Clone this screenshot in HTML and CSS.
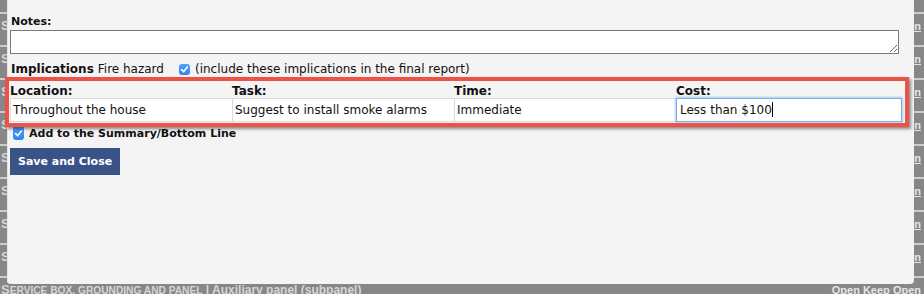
FILE: index.html
```html
<!DOCTYPE html>
<html lang="en">
<head>
    <meta charset="UTF-8">
    <title>Inspection items</title>
    <link rel="stylesheet" href="styles.css">
</head>
<body>
    <div class="screen">
        <ul class="rows">
            <li class="row"><span class="row-title"><span class="row-cat">Service box, grounding and panel</span> | Auxiliary panel (subpanel)</span><span class="row-links"><a href="#">Open</a> <a href="#">Keep Open</a></span></li>
            <li class="row"><span class="row-title"><span class="row-cat">Service box, grounding and panel</span> | Auxiliary panel (subpanel)</span><span class="row-links"><a href="#">Open</a> <a href="#">Keep Open</a></span></li>
            <li class="row"><span class="row-title"><span class="row-cat">Service box, grounding and panel</span> | Auxiliary panel (subpanel)</span><span class="row-links"><a href="#">Open</a> <a href="#">Keep Open</a></span></li>
            <li class="row"><span class="row-title"><span class="row-cat">Service box, grounding and panel</span> | Auxiliary panel (subpanel)</span><span class="row-links"><a href="#">Open</a> <a href="#">Keep Open</a></span></li>
            <li class="row"><span class="row-title"><span class="row-cat">Service box, grounding and panel</span> | Auxiliary panel (subpanel)</span><span class="row-links"><a href="#">Open</a> <a href="#">Keep Open</a></span></li>
            <li class="row"><span class="row-title"><span class="row-cat">Service box, grounding and panel</span> | Auxiliary panel (subpanel)</span><span class="row-links"><a href="#">Open</a> <a href="#">Keep Open</a></span></li>
            <li class="row"><span class="row-title"><span class="row-cat">Service box, grounding and panel</span> | Auxiliary panel (subpanel)</span><span class="row-links"><a href="#">Open</a> <a href="#">Keep Open</a></span></li>
            <li class="row"><span class="row-title"><span class="row-cat">Service box, grounding and panel</span> | Auxiliary panel (subpanel)</span><span class="row-links"><a href="#">Open</a> <a href="#">Keep Open</a></span></li>
            <li class="row"><span class="row-title"><span class="row-cat">Service box, grounding and panel</span> | Auxiliary panel (subpanel)</span><span class="row-links"><a href="#">Open</a> <a href="#">Keep Open</a></span></li>
        </ul>

        <div class="dialog">
            <div class="field-label">Notes:</div>
            <textarea class="notes"></textarea>

            <div class="implications">
                <b>Implications</b> <span class="impl-text">Fire hazard</span>
                <span class="chk"><svg viewBox="0 0 11 11" width="11" height="11"><path d="M2.6 5.6 L4.6 7.8 L8.4 3" fill="none" stroke="#fff" stroke-width="1.6" stroke-linecap="round" stroke-linejoin="round"/></svg></span>
                <span>(include these implications in the final report)</span>
            </div>

            <div class="rec-table">
                <div class="rec-head">Location:</div>
                <div class="rec-head">Task:</div>
                <div class="rec-head">Time:</div>
                <div class="rec-head">Cost:</div>
                <div class="rec-cell">Throughout the house</div>
                <div class="rec-cell">Suggest to install smoke alarms</div>
                <div class="rec-cell">Immediate</div>
                <div class="rec-cell focused">Less than $100<span class="caret"></span></div>
            </div>

            <div class="summary">
                <span class="chk"><svg viewBox="0 0 11 14" width="11" height="14"><path d="M2.6 7.6 L4.6 9.8 L8.4 5" fill="none" stroke="#fff" stroke-width="1.6" stroke-linecap="round" stroke-linejoin="round"/></svg></span>
                <b>Add to the Summary/Bottom Line</b>
            </div>

            <button class="save-btn">Save and Close</button>

            <!-- red highlight drawn over the recommendation row -->
            <div class="highlight"></div>
        </div>
    </div>
</body>
</html>
```

FILE: styles.css
```css
/* page */
body {
    margin: 0;
    background: #878787;
    font-family: 'DejaVu Sans', Verdana, sans-serif;
    overflow: hidden;
}
.screen {
    position: relative;
    width: 924px;
    height: 294px;
    overflow: hidden;
}

/* list behind the dialog */
.rows {
    list-style: none;
    margin: 0;
    padding: 0;
}
.rows::before {
    content: '';
    display: block;
    height: 12px;
    border-bottom: 2px solid #cdcdcd;
}
.row {
    display: flex;
    justify-content: space-between;
    align-items: baseline;
    height: 33px;
    padding: 4px 3px 0 1px;
    box-sizing: border-box;
    border-bottom: 2px solid #cdcdcd;
    background: #878787;
    font-family: 'Liberation Sans', Arial, sans-serif;
    font-weight: bold;
    font-size: 12px;
    line-height: 16px;
    color: #d6d6d6;
}
.row-cat {
    display: inline-block;
    text-transform: uppercase;
    font-size: 10.2px;
}
.row-cat::first-letter {
    font-size: 13px;
}
.row-links {
    font-size: 11px;
}
.row-links a {
    color: #e6e6e6;
    text-decoration: underline;
}
.row:last-child .row-links a {
    text-decoration: none;
}

/* dialog */
.dialog {
    position: absolute;
    left: 7px;
    top: 0;
    width: 907px;
    height: 284px;
    box-sizing: border-box;
    padding: 15px 3px 0;
    background: #f4f4f4;
    box-shadow: inset 1px 0 0 #e4e4e4;
    border-radius: 0 0 4px 4px;
    font-size: 12px;
    line-height: 14px;
    color: #111;
}
.field-label {
    font-weight: bold;
    font-size: 11px;
    padding-left: 1px;
}
.notes {
    display: block;
    width: 889px;
    height: 24px;
    margin: 1px 0 0;
    box-sizing: border-box;
    border: 1px solid #7a7a7a;
    background: #fff;
    resize: vertical;
}
.implications {
    display: flex;
    align-items: center;
    margin-top: 8px;
    padding-left: 1px;
}
.implications b {
    margin-right: 4px;
}
.impl-text {
    margin-right: 15px;
}
.chk {
    display: inline-flex;
    width: 11px;
    height: 11px;
    border-radius: 3px;
    background: linear-gradient(#4da0fb, #2f86f4);
    margin-right: 5px;
}

/* location / task / time / cost */
.rec-table {
    display: grid;
    grid-template-columns: 222px 222px 222px 226px;
    margin-top: 8px;
}
.rec-head {
    font-weight: bold;
    line-height: 14px;
}
.rec-cell {
    height: 24px;
    box-sizing: border-box;
    padding: 0 2px;
    line-height: 22px;
    background: #fff;
    border: 1px solid #dadada;
    border-right: none;
}
.rec-cell.focused {
    border: 1px solid #78aee6;
    box-shadow: 0 0 2px 1px #a9cdf3;
    padding: 0 3px;
}
.caret {
    display: inline-block;
    width: 1px;
    height: 15px;
    background: #000;
    vertical-align: -3px;
}

.summary {
    display: flex;
    align-items: center;
    margin-top: 3px;
    padding-left: 3px;
}
.summary .chk {
    width: 11px;
    height: 14px;
}
.summary b {
    font-size: 11px;
    padding-top: 2px;
}

.save-btn {
    display: block;
    margin-top: 7px;
    height: 27px;
    padding: 0 8px;
    border: none;
    background: #3a5387;
    color: #fff;
    font-family: 'DejaVu Sans', Verdana, sans-serif;
    font-weight: bold;
    font-size: 11px;
}

.highlight {
    position: absolute;
    left: -2px;
    top: 77px;
    width: 904px;
    height: 50px;
    box-sizing: border-box;
    border: 4px solid #ee5247;
    box-shadow: 2px 2px 3px rgba(0, 0, 0, 0.45);
    pointer-events: none;
}
```
